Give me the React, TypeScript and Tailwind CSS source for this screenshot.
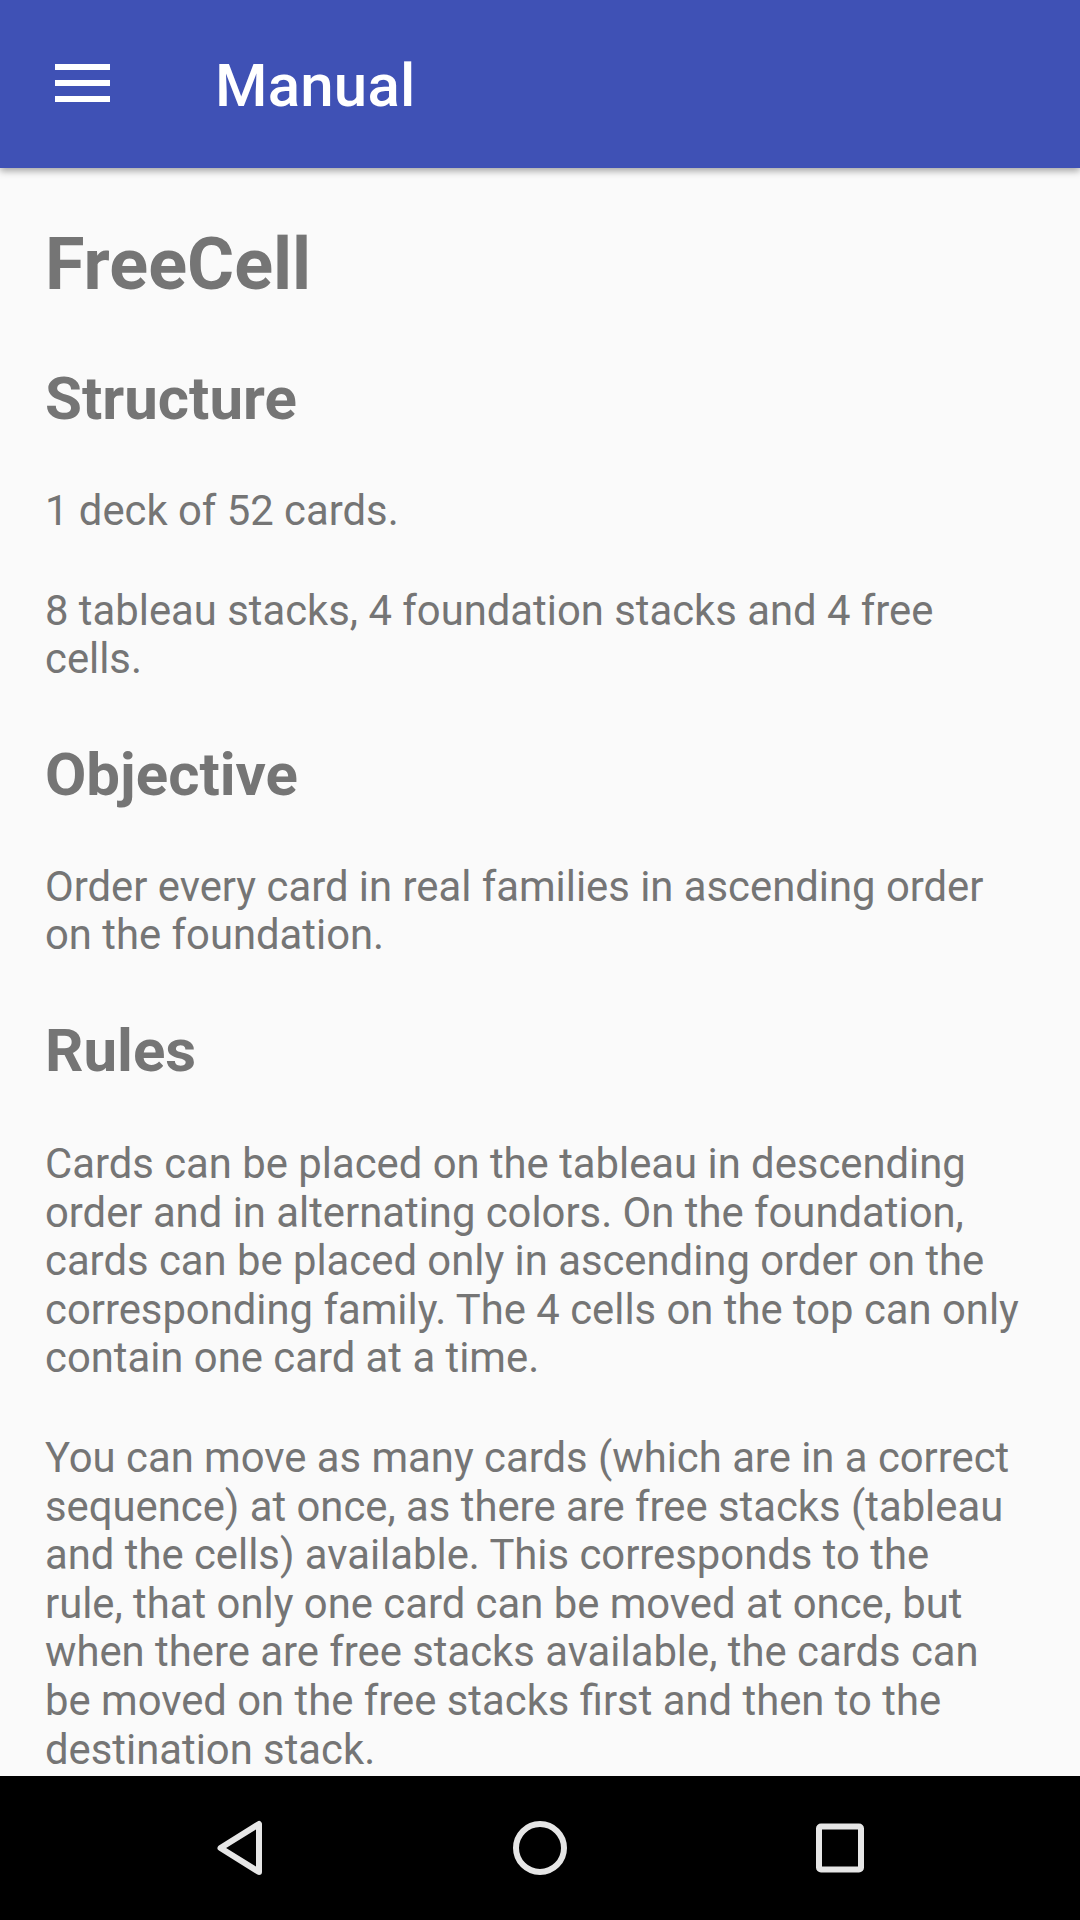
import React from 'react';

const MenuIcon: React.FC = () => (
    <div className="flex flex-col gap-[10px] w-[55px] -mt-[2px]">
        <span className="block h-[6px] bg-white" />
        <span className="block h-[6px] bg-white" />
        <span className="block h-[6px] bg-white" />
    </div>
);

const TopBar: React.FC = () => (
    <header className="relative z-10 h-[168px] shrink-0 bg-[#3f51b5] flex items-center pl-[55px] shadow-[0_3px_7px_rgba(0,0,0,0.35)]">
        <MenuIcon />
        <h1 className="ml-[105px] mt-[4px] text-[60px] leading-none font-medium text-white tracking-[0.2px]">Manual</h1>
    </header>
);

const Heading: React.FC<{ children: React.ReactNode }> = ({ children }) => (
    <h2 className="mt-[56px] text-[60px] leading-[70px] font-bold">{children}</h2>
);

const Para: React.FC<{ children: React.ReactNode; className?: string }> = ({ children, className = 'mt-[51px]' }) => (
    <p className={className}>{children}</p>
);

const NavBar: React.FC = () => (
    <nav className="h-[144px] shrink-0 bg-black flex items-center justify-center">
        <div className="w-[300px] flex justify-center">
            <svg width="60" height="60" viewBox="0 0 60 60" fill="none" stroke="#e6e6e6" strokeWidth="6" strokeLinejoin="round">
                <polygon points="10.5,30 49,6 49,54" />
            </svg>
        </div>
        <div className="w-[300px] flex justify-center">
            <svg width="60" height="60" viewBox="0 0 60 60" fill="none" stroke="#e6e6e6" strokeWidth="6">
                <circle cx="30" cy="30" r="24" />
            </svg>
        </div>
        <div className="w-[300px] flex justify-center">
            <svg width="60" height="60" viewBox="0 0 60 60" fill="none" stroke="#e6e6e6" strokeWidth="6">
                <rect x="9" y="8.5" width="42" height="43" rx="2" />
            </svg>
        </div>
    </nav>
);

export default function App() {
    return (
        <div className="h-[1920px] w-[1080px] flex flex-col overflow-hidden bg-[#fafafa] font-['Roboto',sans-serif]">
            <TopBar />
            <main className="flex-1 overflow-hidden pt-[54px] pl-[45px] pr-[44px] text-[#757575] text-[41.8px] leading-[48.6px]">
                <h1 className="text-[72px] leading-[86px] font-bold">FreeCell</h1>
                <Heading>Structure</Heading>
                <Para className="mt-[53px]">1 deck of 52 cards.</Para>
                <Para>8 tableau stacks, 4 foundation stacks and 4 free cells.</Para>
                <Heading>Objective</Heading>
                <Para className="mt-[53px]">Order every card in real families in ascending order on the foundation.</Para>
                <Heading>Rules</Heading>
                <Para className="mt-[54px]">
                    Cards can be placed on the tableau in descending order and in alternating colors. On the foundation,
                    cards can be placed only in ascending order on the corresponding family. The 4 cells on the top can only
                    contain one card at a time.
                </Para>
                <Para className="mt-[51px] whitespace-nowrap">
                    You can move as many cards (which are in a correct<br />
                    sequence) at once, as there are free stacks (tableau<br />
                    and the cells) available. This corresponds to the<br />
                    rule, that only one card can be moved at once, but<br />
                    when there are free stacks available, the cards can<br />
                    be moved on the free stacks first and then to the<br />
                    destination stack.
                </Para>
            </main>
            <NavBar />
        </div>
    );
}
